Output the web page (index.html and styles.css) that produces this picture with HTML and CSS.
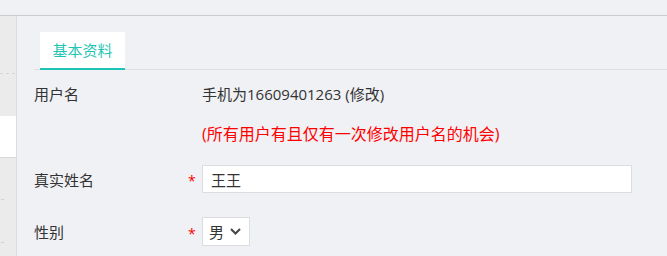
FILE: index.html
```html
<!DOCTYPE html>
<html lang="zh-CN">
<head>
    <meta charset="UTF-8">
    <title>基本资料</title>
    <link rel="stylesheet" href="styles.css">
</head>
<body>
    <div class="topbar"></div>
    <div class="layout">
        <div class="sidebar">
            <div class="side-block side-top"></div>
            <div class="side-block side-active"></div>
            <div class="side-block side-rest">
                <span class="tick tick-1"></span>
                <span class="tick tick-2"></span>
            </div>
        </div>
        <div class="main">
            <div class="tabs">
                <div class="tab active">基本资料</div>
            </div>

            <div class="form">
                <div class="row row-user">
                    <div class="label">用户名</div>
                    <div class="star"></div>
                    <div class="field">手机为16609401263 (修改)</div>
                </div>
                <div class="row row-tip">
                    <div class="label"></div>
                    <div class="star"></div>
                    <div class="field tip">(所有用户有且仅有一次修改用户名的机会)</div>
                </div>
                <div class="row row-name">
                    <div class="label">真实姓名</div>
                    <div class="star">*</div>
                    <div class="field">
                        <input class="input" type="text" value="王王">
                    </div>
                </div>
                <div class="row row-sex">
                    <div class="label">性别</div>
                    <div class="star">*</div>
                    <div class="field">
                        <div class="select">
                            <span>男</span>
                            <svg width="11" height="7" viewBox="0 0 11 7"><path d="M1 1 L5.5 5.5 L10 1" fill="none" stroke="#444" stroke-width="2"/></svg>
                        </div>
                    </div>
                </div>
            </div>
        </div>
    </div>
</body>
</html>
```

FILE: styles.css
```css
body {
    margin: 0;
    background-color: #f0f1f5;
    font-family: "Open Sans", "Noto Sans CJK SC", sans-serif;
    font-size: 15px;
    color: #333;
    overflow: hidden;
}
.topbar {
    height: 15px;
    border-bottom: 1px solid #cbcbcf;
}
.layout {
    display: flex;
    height: 240px;
}
.sidebar {
    width: 16px;
    border-right: 1px solid #dcdcdc;
    display: flex;
    flex-direction: column;
}
.side-block {
    background-color: #ebebeb;
    position: relative;
}
.side-top {
    height: 100px;
    background-image: linear-gradient(90deg, #d6d6d6 50%, transparent 50%);
    background-size: 6px 1px;
    background-repeat: repeat-x;
    background-position: 0 57px;
}
.side-active {
    height: 41px;
    background-color: #fff;
    border-bottom: 1px solid #d8d8d8;
}
.side-rest {
    flex: 1;
}
.tick {
    position: absolute;
    left: 1px;
    width: 3px;
    height: 1px;
    background-color: #d0d0d0;
}
.tick-1 {
    top: 41px;
}
.tick-2 {
    top: 84px;
}
.main {
    flex: 1;
    padding: 16px 0 0 17px;
}
.tabs {
    display: flex;
    border-bottom: 1px solid #dddee2;
    padding-left: 6px;
}
.tab {
    width: 85px;
    height: 36px;
    line-height: 36px;
    text-align: center;
    background-color: #fff;
    color: #1fc5b4;
    border-bottom: 2px solid #1fc5b4;
    margin-bottom: -1px;
}
.row {
    display: flex;
    align-items: center;
}
.row-user {
    height: 28px;
    margin-top: 9px;
}
.row-tip {
    height: 28px;
    margin-top: 12px;
}
.row-name {
    height: 28px;
    margin-top: 18px;
}
.row-sex {
    height: 29px;
    margin-top: 24px;
}
.label {
    width: 154px;
    color: #333;
}
.star {
    width: 14px;
    color: #f00;
    font-size: 14px;
    padding-top: 3px;
}
.field {
    color: #333;
}
.tip {
    color: #f00;
    font-size: 16px;
}
.input {
    box-sizing: border-box;
    width: 430px;
    height: 28px;
    border: 1px solid #dcdde1;
    background-color: #fff;
    padding: 0 8px;
    font-family: "Open Sans", "Noto Sans CJK SC", sans-serif;
    font-size: 15px;
    color: #333;
    outline: none;
}
.select {
    box-sizing: border-box;
    width: 48px;
    height: 29px;
    border: 1px solid #dcdde1;
    background-color: #fff;
    display: flex;
    align-items: center;
    padding-left: 6px;
    gap: 6px;
}
```
